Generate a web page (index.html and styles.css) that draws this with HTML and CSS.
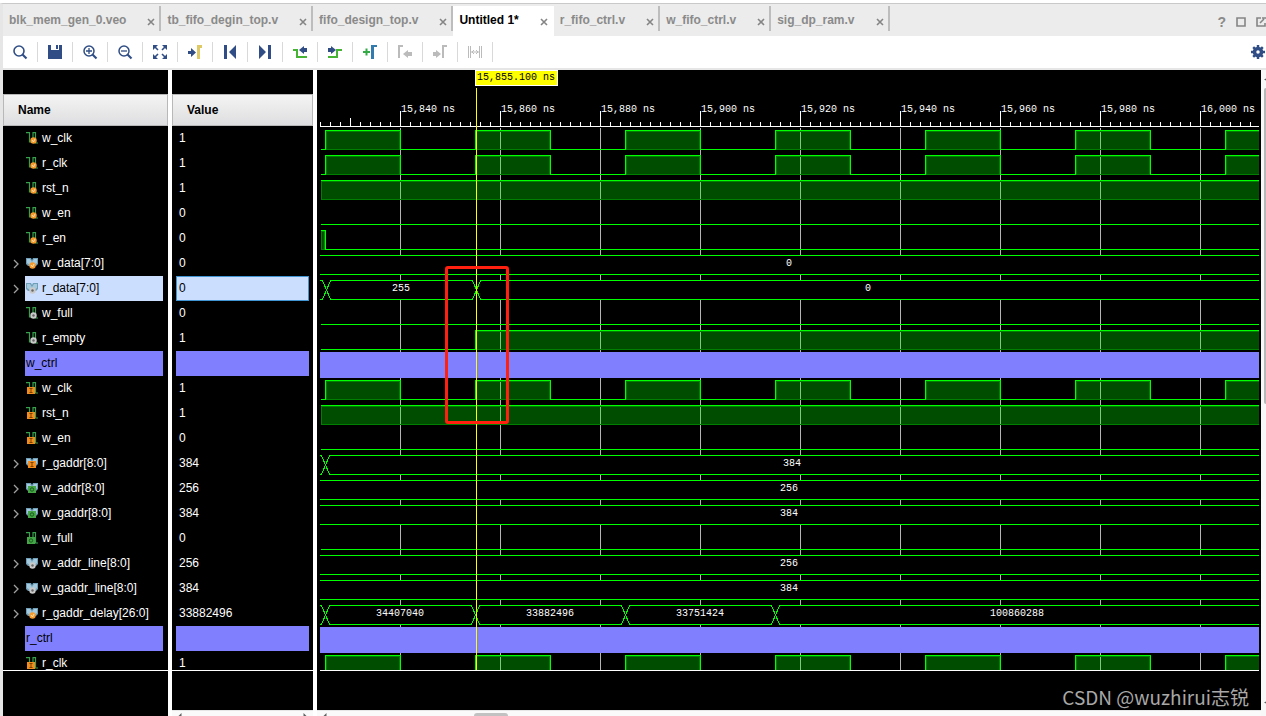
FILE: index.html
```html
<!DOCTYPE html>
<html lang="en">
<head>
<meta charset="utf-8">
<title>Waveform viewer</title>
<link rel="stylesheet" href="styles.css">
</head>
<body>
<svg class="defs" aria-hidden="true">
  <defs>
    <symbol id="x" viewBox="0 0 8 8"><path d="M1 1l6 6M7 1L1 7" stroke="#858585" stroke-width="1.6" fill="none"/></symbol>
    <symbol id="chev" viewBox="0 0 6 10"><path d="M1 1l4 4-4 4" stroke="#a0a0a0" stroke-width="1.3" fill="none"/></symbol>
    <symbol id="scalar" viewBox="0 0 12 12"><path d="M0 .6h3.500v9.400h3.500V.6h2.500v10.400H12" stroke="#36a04c" stroke-width="1.200" fill="none"/></symbol>
    <symbol id="vector" viewBox="0 0 12 12"><path d="M0 1h5l1 2 1-2h5v6l-2 2H2L0 7z" fill="#6f9fb8"/><path d="M1 2h3l2 3-2 3L1 6zM11 2H8L6 5l2 3 3-2z" fill="#a5c9dc"/></symbol>
    <symbol id="ball-o" viewBox="0 0 12 12"><circle cx="7.500" cy="8.500" r="3.200" fill="#f79a2b"/><path d="M6 8l1.500 2L9 7" stroke="#ffe0b0" fill="none"/></symbol>
    <symbol id="ball-g" viewBox="0 0 12 12"><circle cx="7.500" cy="8.500" r="3.200" fill="#c9c9c9"/><circle cx="7.500" cy="8.500" r="1.200" fill="#666"/></symbol>
    <symbol id="box-o" viewBox="0 0 12 12"><path d="M1 5h8v7H1z" fill="#f28c1e"/><path d="M3.500 6.500h3M5 6.500v4M3.500 10.500h3" stroke="#7a4300" fill="none"/></symbol>
    <symbol id="box-g" viewBox="0 0 12 12"><path d="M1 5h8v7H1z" fill="#46a546"/><circle cx="5" cy="8.500" r="1.700" stroke="#175c1c" fill="none"/></symbol>
    <symbol id="s-o" viewBox="0 0 12 12"><use href="#scalar"/><use href="#ball-o"/></symbol>
    <symbol id="s-g" viewBox="0 0 12 12"><use href="#scalar"/><use href="#ball-g"/></symbol>
    <symbol id="s-bo" viewBox="0 0 12 12"><use href="#scalar"/><use href="#box-o"/></symbol>
    <symbol id="s-bg" viewBox="0 0 12 12"><use href="#scalar"/><use href="#box-g"/></symbol>
    <symbol id="v-o" viewBox="0 0 12 12"><use href="#vector"/><use href="#ball-o" x="-1"/></symbol>
    <symbol id="v-g" viewBox="0 0 12 12"><use href="#vector"/><use href="#ball-g" x="-1"/></symbol>
    <symbol id="v-bo" viewBox="0 0 12 12"><use href="#vector"/><use href="#box-o" x="1" y="-1"/></symbol>
    <symbol id="v-bg" viewBox="0 0 12 12"><use href="#vector"/><use href="#box-g" x="1" y="-1"/></symbol>
    <g id="pulse"><rect class="fill" x="1" y="1" width="73" height="18"/><path class="sig" d="M0 19V0H75V19"/></g>
    <g id="clock">
      <path class="sig" d="M320 19H2570"/>
      <use href="#pulse" x="325"/><use href="#pulse" x="475"/><use href="#pulse" x="625"/><use href="#pulse" x="775"/><use href="#pulse" x="925"/><use href="#pulse" x="1075"/><use href="#pulse" x="1225"/><use href="#pulse" x="1375"/><use href="#pulse" x="1525"/><use href="#pulse" x="1675"/><use href="#pulse" x="1825"/><use href="#pulse" x="1975"/><use href="#pulse" x="2125"/><use href="#pulse" x="2275"/><use href="#pulse" x="2425"/>
    </g>
    <g id="high"><rect class="fill" x="321" y="1" width="2400" height="18"/><path class="sig" d="M320 0H2720"/></g>
    <rect id="bus" class="bus" x="310" y="0" width="2400" height="19"/>
    <g id="cross"><path class="gap" d="M-4 0H4M-4 19H4"/><path class="sig" d="M-5 0h1L4 19h1M-5 19h1L4 0h1"/></g>
    <pattern id="ticks" x="320" width="100" height="5" y="122" patternUnits="userSpaceOnUse">
      <path d="M0 0h1v5h-1zM10 0h1v5h-1zM20 0h1v5h-1zM30 0h1v5h-1zM40 0h1v5h-1zM50 0h1v5h-1zM60 0h1v5h-1zM70 0h1v5h-1zM80 0h1v5h-1zM90 0h1v5h-1z" fill="#fff"/>
    </pattern>
  </defs>
</svg>

<div class="window">
  <header class="tabs">
    <div class="tab"><span>blk_mem_gen_0.veo</span><button class="close" aria-label="Close"><svg><use href="#x"/></svg></button></div>
    <div class="tab"><span>tb_fifo_degin_top.v</span><button class="close" aria-label="Close"><svg><use href="#x"/></svg></button></div>
    <div class="tab"><span>fifo_design_top.v</span><button class="close" aria-label="Close"><svg><use href="#x"/></svg></button></div>
    <div class="tab active"><span>Untitled 1*</span><button class="close" aria-label="Close"><svg><use href="#x"/></svg></button></div>
    <div class="tab"><span>r_fifo_ctrl.v</span><button class="close" aria-label="Close"><svg><use href="#x"/></svg></button></div>
    <div class="tab"><span>w_fifo_ctrl.v</span><button class="close" aria-label="Close"><svg><use href="#x"/></svg></button></div>
    <div class="tab"><span>sig_dp_ram.v</span><button class="close" aria-label="Close"><svg><use href="#x"/></svg></button></div>
    <div class="controls">
      <button class="help">?</button>
      <button aria-label="Maximize"><svg width="10" height="10"><path d="M1 1h8v8H1z" fill="none" stroke="#858585" stroke-width="1.600"/></svg></button>
      <button aria-label="Float"><svg width="10" height="10"><path d="M5 1H1v8h8V6M4 6l4-4M6 1h4" fill="none" stroke="#858585" stroke-width="1.600"/></svg></button>
    </div>
  </header>

  <nav class="toolbar">
    <button class="tool" aria-label="Search"><svg viewBox="0 0 16 16"><circle cx="7" cy="7" r="5" fill="none" stroke="#304e85" stroke-width="1.600"/><path d="M10.500 10.500l4 4" stroke="#304e85" stroke-width="2.200"/></svg></button>
    <button class="tool" aria-label="Save"><svg viewBox="0 0 16 16"><path d="M1 1h3v5h8V1h3v14H1z" fill="#304e85"/><path d="M9 1h2v4H9z" fill="#304e85"/></svg></button>
    <button class="tool" aria-label="Zoom in"><svg viewBox="0 0 16 16"><circle cx="7" cy="7" r="5" fill="none" stroke="#304e85" stroke-width="1.500"/><path d="M4 7h6M7 4v6" stroke="#304e85" stroke-width="1.300"/><path d="M10.500 10.500l4 4" stroke="#304e85" stroke-width="2.200"/></svg></button>
    <button class="tool" aria-label="Zoom out"><svg viewBox="0 0 16 16"><circle cx="7" cy="7" r="5" fill="none" stroke="#304e85" stroke-width="1.500"/><path d="M4 7h6" stroke="#304e85" stroke-width="1.300"/><path d="M10.500 10.500l4 4" stroke="#304e85" stroke-width="2.200"/></svg></button>
    <button class="tool" aria-label="Zoom fit"><svg viewBox="0 0 16 16"><path d="M1 1h5L1 6zM15 1v5l-5-5zM1 15v-5l5 5zM15 15h-5l5-5z" fill="#304e85"/><path d="M2 2l4 4M14 2l-4 4M2 14l4-4M14 14l-4-4" stroke="#304e85" stroke-width="1.600"/></svg></button>
    <button class="tool" aria-label="Go to cursor"><svg viewBox="0 0 16 16"><path d="M1 7h3V4l5 4.500L4 13v-3H1z" fill="#304e85"/><path d="M10 15V1h5v3h-2v11z" fill="#dfc965"/></svg></button>
    <button class="tool" aria-label="First"><svg viewBox="0 0 16 16"><path d="M2 1h3v14H2zM14 1v14L7 8z" fill="#304e85"/></svg></button>
    <button class="tool" aria-label="Last"><svg viewBox="0 0 16 16"><path d="M11 1h3v14h-3zM2 1v14l7-7z" fill="#304e85"/></svg></button>
    <button class="tool" aria-label="Previous transition"><svg viewBox="0 0 16 16"><path d="M1 6h4v7h10" fill="none" stroke="#46b335" stroke-width="2"/><path d="M15 4v4h-3v2L7 6l5-4v2z" fill="#304e85"/></svg></button>
    <button class="tool" aria-label="Next transition"><svg viewBox="0 0 16 16"><path d="M1 13h9V6h5" fill="none" stroke="#46b335" stroke-width="2"/><path d="M1 4v4h3v2l5-4-5-4v2z" fill="#304e85"/></svg></button>
    <button class="tool" aria-label="Add marker"><svg viewBox="0 0 16 16"><path d="M1 8h7M4.500 4.500v7" stroke="#36a947" stroke-width="2"/><path d="M9 15V1h6v2h-3v12z" fill="#337aad"/></svg></button>
    <button class="tool" aria-label="Previous marker" disabled><svg viewBox="0 0 16 16"><path d="M2 14V2h4" fill="none" stroke="#bbb" stroke-width="2"/><path d="M15 8v4h-4v2L6 10l5-4v2z" fill="#bbb"/></svg></button>
    <button class="tool" aria-label="Next marker" disabled><svg viewBox="0 0 16 16"><path d="M11 14V2h4" fill="none" stroke="#bbb" stroke-width="2"/><path d="M1 8v4h3v2l5-4-5-4v2z" fill="#bbb"/></svg></button>
    <button class="tool" aria-label="Swap cursors" disabled><svg viewBox="0 0 16 16"><path d="M1.500 2v12M3.500 2v12M12.500 2v12M14.500 2v12M4 8h8M7 6L5 8l2 2M9 6l2 2-2 2" fill="none" stroke="#bbb"/></svg></button>
    <button class="gear" aria-label="Settings"><svg viewBox="0 0 16 16"><circle cx="8" cy="8" r="4" fill="none" stroke="#304e85" stroke-width="4"/><path d="M8 0v3M8 13v3M0 8h3M13 8h3M2.500 2.500l2 2M11.500 11.500l2 2M13.500 2.500l-2 2M4.500 11.500l-2 2" stroke="#304e85" stroke-width="2.800"/></svg></button>
  </nav>

  <main class="panes">
    <section class="pane names">
      <h2>Name</h2>
      <ul>
        <li><i></i><span><svg><use href="#s-o"/></svg>w_clk</span></li>
        <li><i></i><span><svg><use href="#s-o"/></svg>r_clk</span></li>
        <li><i></i><span><svg><use href="#s-o"/></svg>rst_n</span></li>
        <li><i></i><span><svg><use href="#s-o"/></svg>w_en</span></li>
        <li><i></i><span><svg><use href="#s-o"/></svg>r_en</span></li>
        <li><i><svg><use href="#chev"/></svg></i><span><svg><use href="#v-o"/></svg>w_data[7:0]</span></li>
        <li class="selected"><i><svg><use href="#chev"/></svg></i><span><svg><use href="#v-g"/></svg>r_data[7:0]</span></li>
        <li><i></i><span><svg><use href="#s-g"/></svg>w_full</span></li>
        <li><i></i><span><svg><use href="#s-g"/></svg>r_empty</span></li>
        <li class="divider"><i></i><span>w_ctrl</span></li>
        <li><i></i><span><svg><use href="#s-bo"/></svg>w_clk</span></li>
        <li><i></i><span><svg><use href="#s-bo"/></svg>rst_n</span></li>
        <li><i></i><span><svg><use href="#s-bo"/></svg>w_en</span></li>
        <li><i><svg><use href="#chev"/></svg></i><span><svg><use href="#v-bo"/></svg>r_gaddr[8:0]</span></li>
        <li><i><svg><use href="#chev"/></svg></i><span><svg><use href="#v-bg"/></svg>w_addr[8:0]</span></li>
        <li><i><svg><use href="#chev"/></svg></i><span><svg><use href="#v-bg"/></svg>w_gaddr[8:0]</span></li>
        <li><i></i><span><svg><use href="#s-bg"/></svg>w_full</span></li>
        <li><i><svg><use href="#chev"/></svg></i><span><svg><use href="#v-g"/></svg>w_addr_line[8:0]</span></li>
        <li><i><svg><use href="#chev"/></svg></i><span><svg><use href="#v-g"/></svg>w_gaddr_line[8:0]</span></li>
        <li><i><svg><use href="#chev"/></svg></i><span><svg><use href="#v-o"/></svg>r_gaddr_delay[26:0]</span></li>
        <li class="divider"><i></i><span>r_ctrl</span></li>
        <li><i></i><span><svg><use href="#s-bo"/></svg>r_clk</span></li>
      </ul>
      <div class="foot"></div>
    </section>

    <section class="pane values">
      <h2>Value</h2>
      <ul>
        <li>1</li><li>1</li><li>1</li><li>0</li><li>0</li><li>0</li>
        <li class="selected">0</li>
        <li>0</li><li>1</li>
        <li class="divider"></li>
        <li>1</li><li>1</li><li>0</li><li>384</li><li>256</li><li>384</li><li>0</li><li>256</li><li>384</li><li>33882496</li>
        <li class="divider"></li>
        <li>1</li>
      </ul>
      <div class="foot"></div>
      <div class="hscroll"><svg class="arrow" viewBox="0 0 4 4"><path d="M0 4l4-4v4z"/></svg><svg class="arrow" viewBox="0 0 4 4"><path d="M4 4L0 0v4z"/></svg></div>
    </section>

    <section class="wave">
      <div class="plot">
        <svg class="trace">
          <g transform="translate(-320 -70)">
            <rect x="320" y="122" width="2400" height="4" fill="url(#ticks)"/>
            <path d="M320 126h2400v1H320zM350 118h1v5h-1z" fill="#fff"/>
          </g>
          <g transform="translate(-319.5 -69.5)">
            <path class="grid" d="M400 127V680M500 127V680M600 127V680M700 127V680M800 127V680M900 127V680M1000 127V680M1100 127V680M1200 127V680"/>
            <path class="major" d="M400 110V126M500 110V126M600 110V126M700 110V126M800 110V126M900 110V126M1000 110V126M1100 110V126M1200 110V126M450 121v2M550 121v2M650 121v2M750 121v2M850 121v2M950 121v2M1050 121v2M1150 121v2M1250 121v2"/>
            <use href="#clock" y="130"/>
            <use href="#clock" y="155"/>
            <use href="#high" y="180"/>
            <path class="sig" d="M320 224H2720M320 324H2720M320 449H2720M320 549H2720"/>
            <rect class="fill" x="321" y="231" width="3" height="18"/>
            <path class="sig" d="M320 230H325V249H2720"/>
            <use href="#bus" y="255"/>
            <use href="#bus" y="280"/><use href="#cross" x="326" y="280"/><use href="#cross" x="476" y="280"/>
            <rect class="fill" x="476" y="331" width="2400" height="18"/>
            <path class="sig" d="M320 349H475V330H2720"/>
            <rect class="band" x="310" y="351" width="2400" height="26"/>
            <use href="#clock" y="380"/>
            <use href="#high" y="405"/>
            <use href="#bus" y="455"/><use href="#cross" x="325" y="455"/>
            <use href="#bus" y="480"/>
            <use href="#bus" y="505"/>
            <use href="#bus" y="555"/>
            <use href="#bus" y="580"/>
            <use href="#bus" y="605"/><use href="#cross" x="325" y="605"/><use href="#cross" x="475" y="605"/><use href="#cross" x="625" y="605"/><use href="#cross" x="775" y="605"/>
            <rect class="band" x="310" y="626" width="2400" height="26"/>
            <use href="#clock" y="655"/>
            <path class="cursor" d="M476 87V680"/>
          </g>
          <g class="labels" transform="translate(-320 -70)">
            <text x="401" y="112">15,840 ns</text><text x="501" y="112">15,860 ns</text><text x="601" y="112">15,880 ns</text><text x="701" y="112">15,900 ns</text><text x="801" y="112">15,920 ns</text><text x="901" y="112">15,940 ns</text><text x="1001" y="112">15,960 ns</text><text x="1101" y="112">15,980 ns</text><text x="1201" y="112">16,000 ns</text>
            <g text-anchor="middle">
              <text x="789" y="266">0</text>
              <text x="401" y="291">255</text><text x="868" y="291">0</text>
              <text x="792" y="466">384</text>
              <text x="789" y="491">256</text>
              <text x="789" y="516">384</text>
              <text x="789" y="566">256</text>
              <text x="789" y="591">384</text>
              <text x="400" y="616">34407040</text><text x="550" y="616">33882496</text><text x="700" y="616">33751424</text><text x="1017" y="616">100860288</text>
            </g>
          </g>
        </svg>
        <div class="time">15,855.100 ns</div>
        <div class="highlight"></div>
      </div>
      <div class="foot"></div>
      <div class="hscroll"><svg class="arrow" viewBox="0 0 4 4"><path d="M0 4l4-4v4z"/></svg><div class="thumb"></div></div>
      <div class="watermark">CSDN @wuzhirui志锐</div>
    </section>
    <div class="vscroll"><svg class="arrow" viewBox="0 0 4 4"><path d="M0 2l4-2v4z"/></svg><div class="thumb"></div><svg class="arrow" viewBox="0 0 4 4"><path d="M0 2l4-2v4z"/></svg></div>
  </main>
</div>
</body>
</html>
```
FILE: styles.css
```css
* { box-sizing: border-box; }
body {
  margin: 0;
  background: #fff;
  font: 12px/15px "Liberation Sans", Arial, sans-serif;
  color: #000;
}
button { border: 0; padding: 0; margin: 0; background: none; font: inherit; color: inherit; }
svg { display: block; }
ul { list-style: none; margin: 0; padding: 0; }
.defs { position: absolute; width: 0; height: 0; }

.window {
  display: flex;
  flex-direction: column;
  height: 100vh;
  overflow: hidden;
  padding-top: 3px;
}

/* Tabs */
.tabs {
  display: flex;
  height: 33px;
  flex: none;
  border-top: 1px solid #c9c9c9;
  border-left: 3px solid #e6e6e6;
  background: #ececec;
  padding-top: 2px;
  font-weight: bold;
  color: #8a8a8a;
}
.tab {
  display: flex;
  align-items: center;
  gap: 21px;
  height: 25px;
  padding: 3px 4px 0 6px;
  border-right: 2px solid #bdbdbd;
  white-space: nowrap;
}
.tab.active { height: 30px; padding: 3px 6px 5px; border: 0; background: #fff; color: #000; }
.close { padding-top: 4px; }
.close svg { width: 8px; height: 8px; }
.controls { display: flex; align-items: center; gap: 10px; margin-left: auto; height: 32px; }
.help { font-size: 14px; font-weight: bold; }

/* Toolbar */
.toolbar {
  display: flex;
  align-items: center;
  flex: none;
  height: 34px;
  padding-right: 1px;
  border-left: 3px solid #e6e6e6;
  border-bottom: 2px solid #e6e6e6;
}
.tool {
  display: flex;
  align-items: center;
  justify-content: center;
  width: 35px;
  height: 20px;
  border-right: 1px solid #d9d9d9;
}
.tool svg { width: 16px; height: 16px; }
.gear { margin-left: auto; }
.gear svg { width: 14px; height: 14px; }

/* Panes */
.panes { display: flex; flex: 1; min-height: 0; gap: 4px; border-left: 3px solid #e6e6e6; }
.pane { display: flex; flex-direction: column; flex: none; padding-top: 24px; background: #000; color: #fff; }
.names { width: 165px; }
.values { width: 141px; }
.pane h2 {
  margin: 0;
  height: 32px;
  flex: none;
  padding: 0 14px;
  border: 1px solid #b8b8b8;
  background: linear-gradient(#f4f4f4, #dedee0);
  font-size: 12px;
  line-height: 30px;
  color: #000;
}
.pane ul { flex: 1; min-height: 0; overflow: hidden; }
.pane li { height: 25px; line-height: 25px; }
.names li { display: flex; padding-right: 5px; }
.names i { display: flex; align-items: center; width: 22px; padding-left: 10px; flex: none; }
.names i svg { width: 6px; height: 10px; }
.names span { display: flex; align-items: center; gap: 4px; flex: 1; padding-left: 1px; white-space: nowrap; }
.names span svg { width: 12px; height: 12px; margin-bottom: 1px; }
.values li { margin: 0 4px; padding-left: 3px; }
.names .selected span, .values .selected { background: #ccdefe; color: #000; }
.values .selected { padding-left: 2px; border: 1px solid #3f94d1; line-height: 23px; }
.names .divider span, .values .divider { background: #8080ff; color: #000; }
.foot { height: 46px; flex: none; border-top: 1px solid #fff; background: #000; }
.values .foot { height: 40px; }

/* Scrollbars */
.hscroll {
  display: flex;
  justify-content: space-between;
  align-items: flex-end;
  flex: none;
  height: 6px;
  padding: 0 6px;
  border-top: 1px solid #e6e6e6;
  background: #fafafa;
}
.arrow { width: 4px; height: 3px; fill: #606060; }
.vscroll { display: flex; flex-direction: column; justify-content: space-between; width: 5px; margin-left: -4px; padding: 8px 0 12px 3px; background: #f8f8f8; }
.vscroll .thumb { flex: none; height: 316px; margin: 7px 0 auto; background: #b8b8b8; border-radius: 2px 0 0 2px; }
.vscroll .arrow { width: 2px; }

/* Waveform */
.wave { position: relative; display: flex; flex-direction: column; flex: 1; min-width: 0; background: #000; }
.plot { position: relative; flex: 1; min-height: 0; margin: 0 2px 0 3px; overflow: hidden; }
.trace { width: 100%; height: 100%; shape-rendering: crispEdges; }
.wave .foot { height: 40px; margin: 0 2px 0 3px; }
.wave .hscroll { justify-content: flex-start; }
.wave .thumb { width: 34px; height: 3px; margin-left: 147px; background: #c2c2c2; border-radius: 3px 3px 0 0; }
.sig { fill: none; stroke: #0f0; }
.fill { fill: rgba(0, 255, 0, 0.3); stroke: #008000; }
.bus { fill: #000; stroke: #0f0; }
.gap { stroke: #000; }
.band { fill: #8080ff; }
.grid { stroke: #b4b4b4; }
.major { stroke: #fff; }
.cursor { stroke: #ff0; }
.labels { fill: #fff; font: 10px "Liberation Mono", monospace; }
.time {
  position: absolute;
  left: 155px;
  top: 0;
  height: 16px;
  padding: 0 2px 0 1px;
  border: 1px solid #fff;
  background: #ff0;
  font: 10px/13px "Liberation Mono", monospace;
}
.highlight {
  position: absolute;
  left: 125px;
  top: 196px;
  width: 64px;
  height: 158px;
  border: 3px solid #ff2010;
  border-radius: 3px;
}
.watermark {
  position: absolute;
  right: 12px;
  bottom: 7px;
  font: 19px/24px "Noto Sans CJK SC", sans-serif;
  color: #a8a8a8;
}
```
